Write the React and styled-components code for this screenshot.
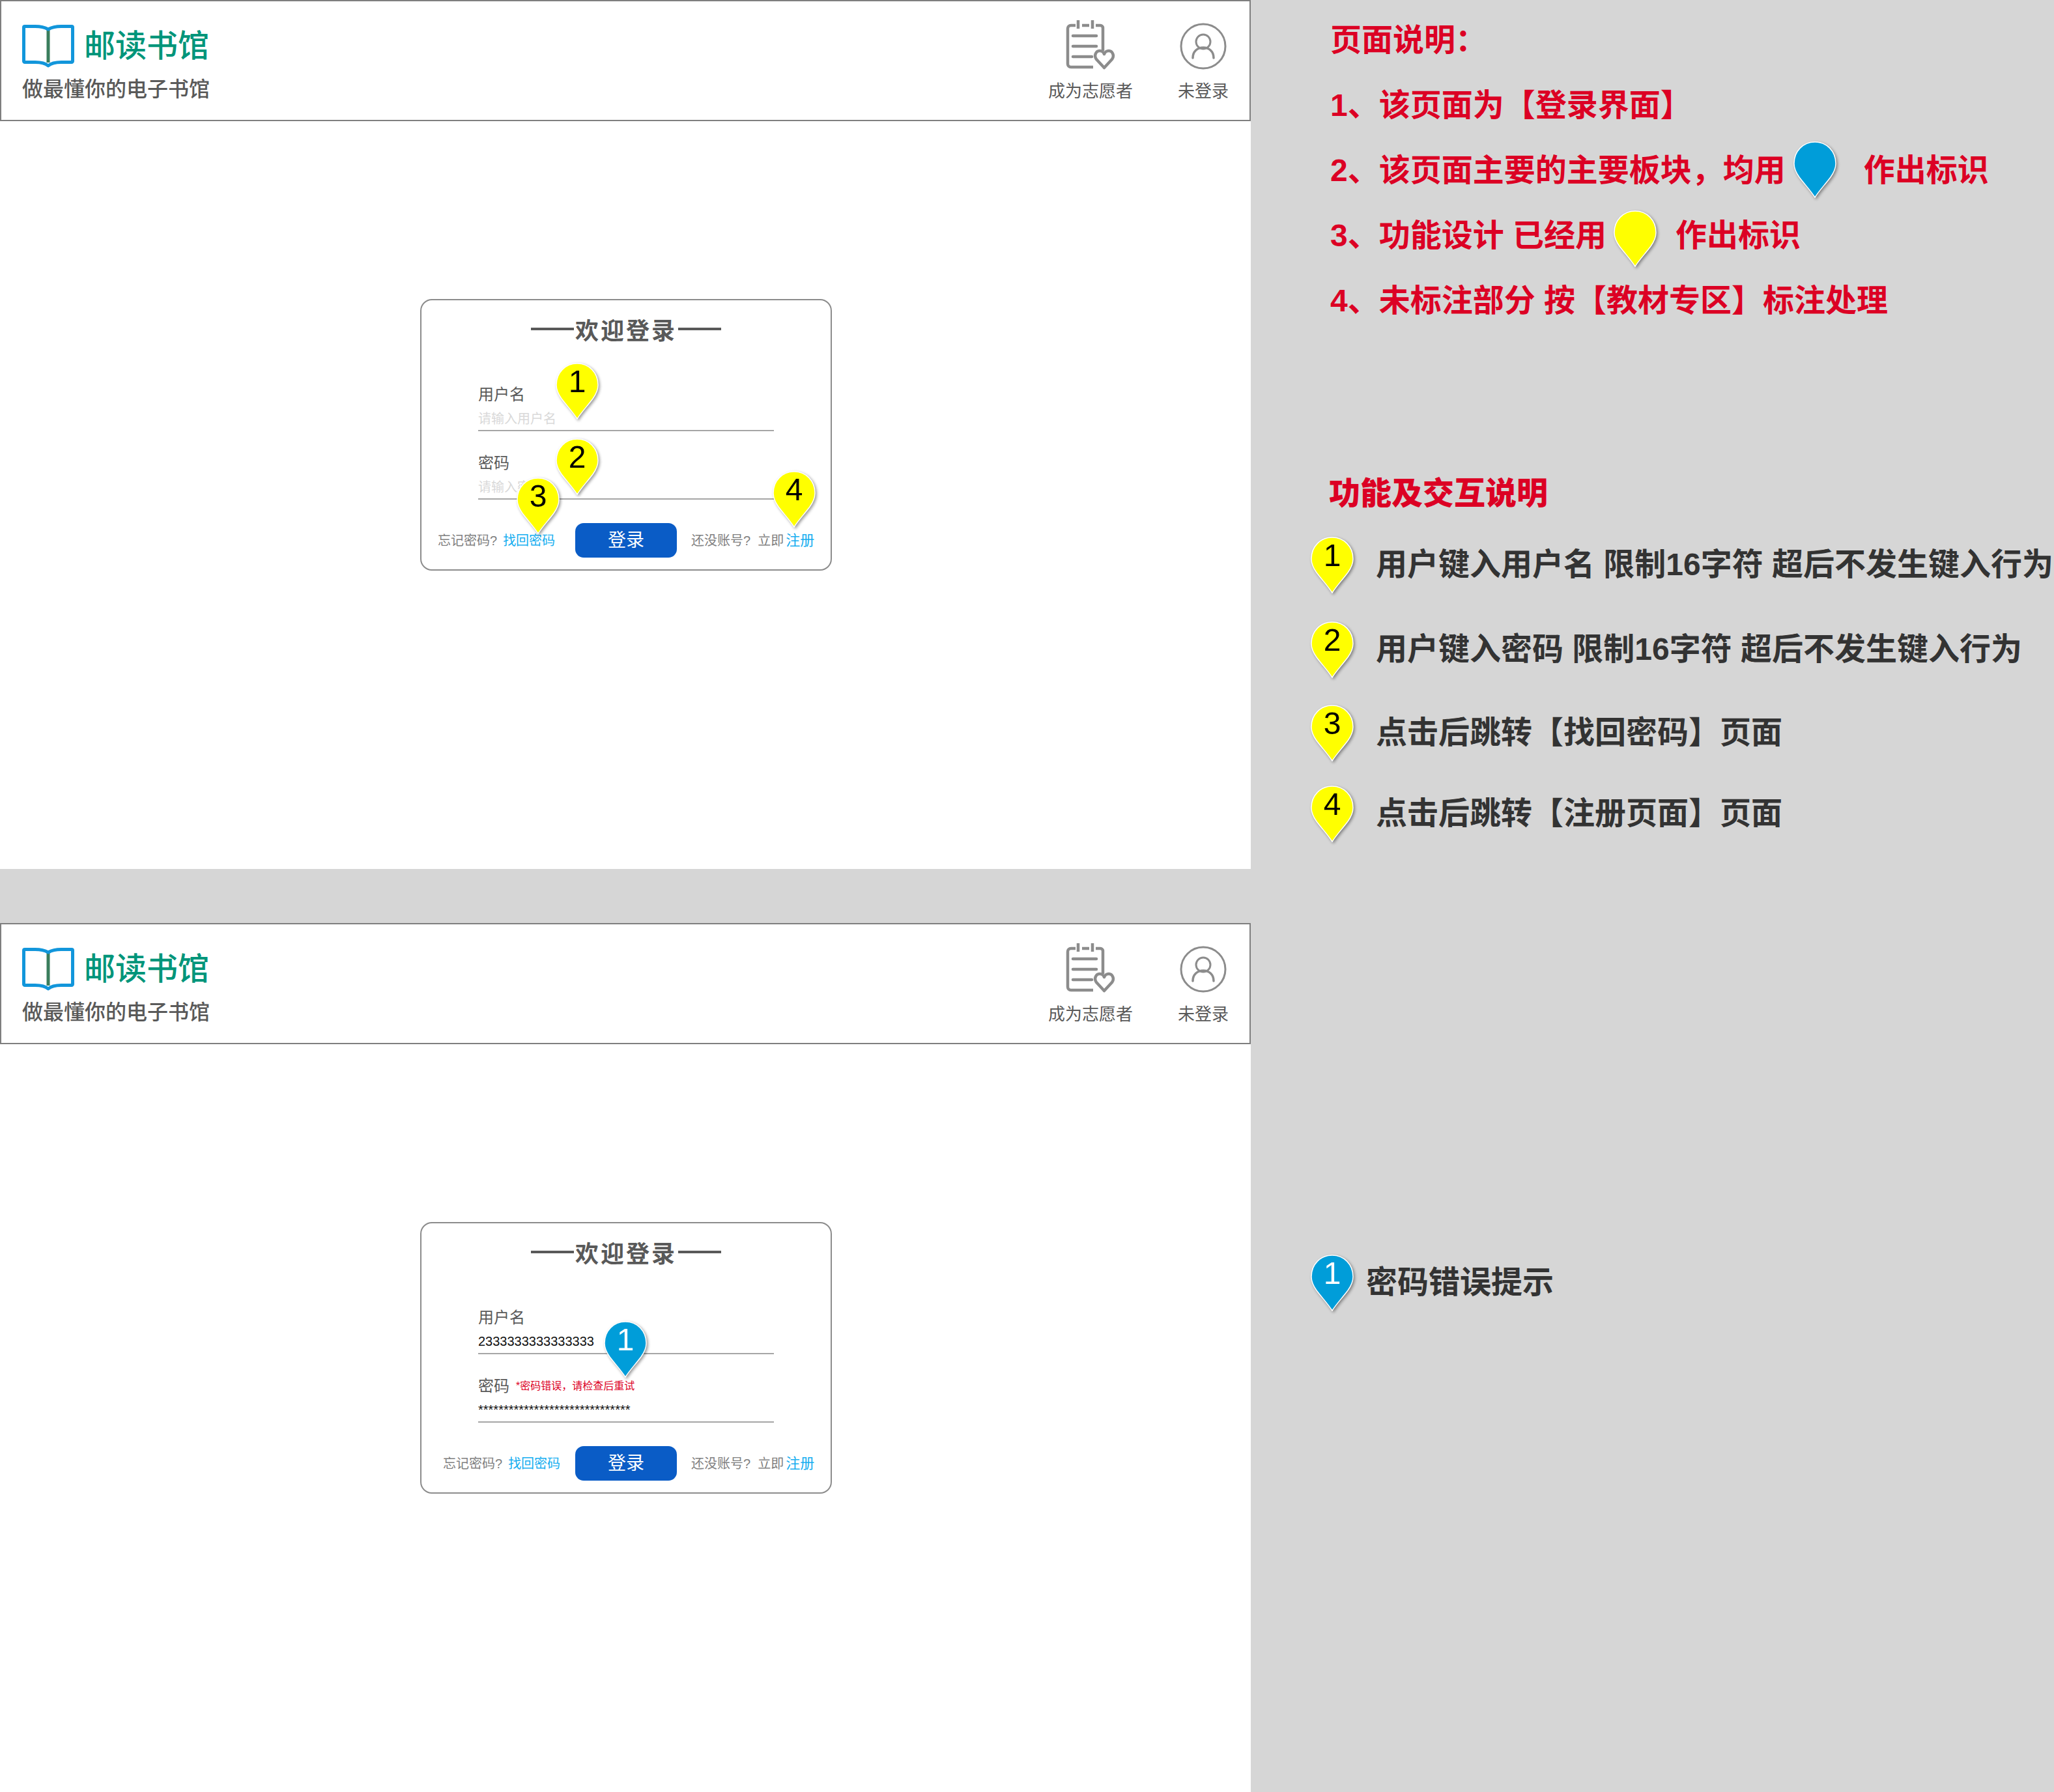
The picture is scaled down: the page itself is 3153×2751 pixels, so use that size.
import React from 'react';
import styled, { createGlobalStyle } from 'styled-components';

const colors = {
  page: '#d6d6d6',
  border: '#7f7f7f',
  rule: '#a6a6a6',
  text: '#595959',
  dark: '#333333',
  red: '#dc0024',
  teal: '#00957a',
  link: '#16aef0',
  button: '#0a5cc6',
  pinBlue: '#009dd9',
  pinYellow: '#ffff00'
};

const GlobalStyle = createGlobalStyle`
  html, body {
    margin: 0;
    padding: 0;
    background: ${colors.page};
  }
  body {
    font-family: "Liberation Sans", "Noto Sans CJK SC", sans-serif;
  }
`;

const Page = styled.div`
  display: flex;
  width: 3153px;
  height: 2751px;
  overflow: hidden;
  background: ${colors.page};
`;

const Screens = styled.div`
  display: flex;
  flex-direction: column;
  gap: 83px;
  width: 1920px;
  flex: none;
`;

const Screen = styled.section`
  display: flex;
  flex-direction: column;
  height: 1334px;
  background: #ffffff;
`;

const Header = styled.header`
  display: flex;
  align-items: stretch;
  justify-content: space-between;
  box-sizing: border-box;
  height: 186px;
  padding: 0 32px;
  border: 2px solid ${colors.border};
`;

const Brand = styled.div`
  display: flex;
  flex-direction: column;
  padding-top: 36px;
`;

const BrandTop = styled.div`
  display: flex;
  align-items: center;
  gap: 15px;
  height: 66px;
`;

const BrandName = styled.div`
  font-size: 48px;
  line-height: 60px;
  font-weight: 500;
  color: ${colors.teal};
`;

const BrandSlogan = styled.div`
  margin-top: 13px;
  font-size: 32px;
  line-height: 40px;
  font-weight: 500;
  color: ${colors.text};
`;

const Actions = styled.nav`
  display: flex;
  gap: 69px;
`;

const Action = styled.div`
  display: flex;
  flex-direction: column;
  align-items: center;
  padding-top: 29px;
`;

const ActionIcon = styled.div`
  display: flex;
  align-items: flex-end;
  height: 76px;
`;

const ActionLabel = styled.div`
  margin-top: 16px;
  font-size: 26px;
  line-height: 34px;
  color: ${colors.text};
`;

const ScreenBody = styled.div`
  display: flex;
  justify-content: center;
  padding-top: 273px;
  padding-left: 2px;
`;

const Card = styled.div`
  position: relative;
  box-sizing: border-box;
  width: 632px;
  height: 417px;
  padding-top: 20px;
  border: 2px solid #8c8c8c;
  border-radius: 18px;
  background: #ffffff;
`;

const CardTitle = styled.div`
  display: flex;
  align-items: center;
  justify-content: center;
  gap: 2px;
  height: 48px;
  font-size: 36px;
  font-weight: 700;
  letter-spacing: 3px;
  color: ${colors.text};
`;

const TitleRule = styled.span`
  width: 66px;
  height: 4px;
  background: ${colors.text};
`;

const Fields = styled.div`
  display: flex;
  flex-direction: column;
  gap: 34px;
  margin-top: 62px;
  padding: 0 87px;
`;

const Field = styled.div`
  display: flex;
  flex-direction: column;
`;

const FieldHead = styled.div`
  display: flex;
  align-items: center;
  gap: 10px;
  height: 30px;
`;

const FieldLabel = styled.div`
  font-size: 24px;
  line-height: 30px;
  color: ${colors.text};
`;

const FieldError = styled.div`
  font-size: 16px;
  line-height: 20px;
  color: ${colors.red};
`;

const FieldValue = styled.div`
  box-sizing: border-box;
  height: 41px;
  border-bottom: 2px solid ${colors.rule};
  font-size: 20px;
  line-height: ${(props) => (props.$empty ? 45 : 42)}px;
  white-space: nowrap;
  color: ${(props) => (props.$empty ? '#d9d9d9' : '#111111')};
`;

const CardFooter = styled.div`
  display: grid;
  grid-template-columns: 1fr 156px 1fr;
  align-items: center;
  margin-top: 36px;
  height: 53px;
`;

const FooterText = styled.div`
  display: flex;
  align-items: center;
  gap: ${(props) => props.$gap}px;
  padding-left: ${(props) => props.$inset}px;
  font-size: 20px;
  line-height: 26px;
  white-space: nowrap;
  color: ${colors.border};
`;

const FooterLink = styled.a`
  font-size: ${(props) => props.$size}px;
  line-height: 22px;
  color: ${colors.link};
`;

const SubmitButton = styled.button`
  height: 53px;
  padding: 0 0 5px;
  border: none;
  border-radius: 13px;
  background: ${colors.button};
  font-family: inherit;
  font-size: 28px;
  color: #ffffff;
`;

const PinWrap = styled.div`
  position: relative;
  flex: none;
  width: 66px;
  height: 87px;
  filter: drop-shadow(2px 2px 2px rgba(0, 0, 0, 0.4));
`;

const PinNumber = styled.span`
  position: absolute;
  top: 2px;
  left: 0;
  width: 66px;
  font-size: 48px;
  font-weight: 400;
  line-height: 54px;
  text-align: center;
  color: ${(props) => (props.$light ? '#ffffff' : '#000000')};
`;

const PinSpot = styled.div`
  position: absolute;
  left: ${(props) => props.$left}px;
  top: ${(props) => props.$top}px;
`;

const Notes = styled.aside`
  display: flex;
  flex-direction: column;
  padding-top: 7px;
  padding-left: 92px;
`;

const NoteList = styled.div`
  display: flex;
  flex-direction: column;
`;

const NoteRow = styled.div`
  display: flex;
  align-items: center;
  height: 100px;
  padding-left: 30px;
  font-size: 48px;
  font-weight: 700;
  white-space: nowrap;
  color: ${colors.red};
`;

const NotePin = styled.span`
  display: flex;
  margin: ${(props) => props.$drop}px ${(props) => props.$after}px 0 ${(props) => props.$before}px;
`;

const SectionTitle = styled.h2`
  margin: 221px 0 0;
  padding-left: 28px;
  font-size: 48px;
  line-height: 60px;
  font-weight: 900;
  color: ${colors.red};
`;

const Legend = styled.div`
  display: flex;
  flex-direction: column;
`;

const LegendRow = styled.div`
  display: flex;
  align-items: center;
  gap: ${(props) => props.$gap}px;
  margin-top: ${(props) => props.$top}px;
  font-size: 48px;
  font-weight: 700;
  white-space: nowrap;
  color: ${colors.dark};
`;

const LegendText = styled.span`
  margin-bottom: 12px;
`;

function Pin({ color, number, light }) {
  return (
    <PinWrap>
      <svg width="66" height="87" viewBox="0 0 66 87">
        <path
          d="M33 1C51 1 65 15 65 34C65 42 62 48 57 55C48 67 40 75 33 86C26 75 18 67 9 55C4 48 1 42 1 34C1 15 15 1 33 1Z"
          fill={color}
          stroke="#ffffff"
          strokeWidth="1.5"
        />
      </svg>
      {number && <PinNumber $light={light}>{number}</PinNumber>}
    </PinWrap>
  );
}

function BookLogo() {
  return (
    <svg width="80" height="66" viewBox="0 0 80 66">
      <rect x="37.5" y="8" width="5" height="50" fill="#3a7d5c" />
      <path
        d="M40 7C34 3.500 27 2.500 20 2.500H4A1.500 1.500 0 0 0 2.500 4V56A1.500 1.500 0 0 0 4 57.500H20C28 57.500 35 58.500 40 63C45 58.500 52 57.500 60 57.500H76A1.500 1.500 0 0 0 77.500 56V4A1.500 1.500 0 0 0 76 2.500H60C53 2.500 46 3.500 40 7Z"
        fill="none"
        stroke="#1296db"
        strokeWidth="5"
        strokeLinejoin="round"
      />
    </svg>
  );
}

function VolunteerIcon() {
  return (
    <svg width="76" height="76" viewBox="0 0 76 76" fill="none" stroke="#8c8c8c" strokeWidth="4.500">
      <path d="M15 8H8A5 5 0 0 0 3 13V67A5 5 0 0 0 8 72H42" />
      <path d="M46 8H53A4 4 0 0 1 57 12V47" />
      <path d="M19 0V13M41 0V13M25 8H36" />
      <path d="M11 24H47M11 40H47M11 56H40" strokeLinecap="round" />
      <path
        d="M59 73L47 60C43 55 46 47 52 47C55 47 58 49 59 52C60 49 63 47 66 47C72 47 75 55 71 60Z"
        strokeLinejoin="round"
      />
    </svg>
  );
}

function UserIcon() {
  return (
    <svg width="72" height="72" viewBox="0 0 72 72" fill="none" stroke="#8c8c8c" strokeWidth="3">
      <circle cx="36" cy="36" r="34" />
      <circle cx="36" cy="29" r="11" />
      <path d="M20 54C20 44 27 38 36 38C45 38 52 44 52 54" strokeWidth="3.500" strokeLinecap="round" />
    </svg>
  );
}

function SiteHeader() {
  return (
    <Header>
      <Brand>
        <BrandTop>
          <BookLogo />
          <BrandName>邮读书馆</BrandName>
        </BrandTop>
        <BrandSlogan>做最懂你的电子书馆</BrandSlogan>
      </Brand>
      <Actions>
        <Action>
          <ActionIcon>
            <VolunteerIcon />
          </ActionIcon>
          <ActionLabel>成为志愿者</ActionLabel>
        </Action>
        <Action>
          <ActionIcon>
            <UserIcon />
          </ActionIcon>
          <ActionLabel>未登录</ActionLabel>
        </Action>
      </Actions>
    </Header>
  );
}

function LoginCard({ filled, footerInset, children }) {
  return (
    <Card>
      <CardTitle>
        <TitleRule />
        欢迎登录
        <TitleRule />
      </CardTitle>
      <Fields>
        <Field>
          <FieldHead>
            <FieldLabel>用户名</FieldLabel>
          </FieldHead>
          <FieldValue $empty={!filled}>{filled ? '2333333333333333' : '请输入用户名'}</FieldValue>
        </Field>
        <Field>
          <FieldHead>
            <FieldLabel>密码</FieldLabel>
            {filled && <FieldError>*密码错误，请检查后重试</FieldError>}
          </FieldHead>
          <FieldValue $empty={!filled}>{filled ? '*'.repeat(30) : '请输入密码'}</FieldValue>
        </Field>
      </Fields>
      <CardFooter>
        <FooterText $inset={footerInset} $gap={9}>
          忘记密码?
          <FooterLink $size={20}>找回密码</FooterLink>
        </FooterText>
        <SubmitButton>登录</SubmitButton>
        <FooterText $inset={22} $gap={3}>
          还没账号?&nbsp;&nbsp;立即
          <FooterLink $size={22}>注册</FooterLink>
        </FooterText>
      </CardFooter>
      {children}
    </Card>
  );
}

const yellowPins = [
  { number: '1', left: 206, top: 96 },
  { number: '2', left: 206, top: 212 },
  { number: '3', left: 146, top: 272 },
  { number: '4', left: 539, top: 262 }
];

const legendRows = [
  { number: '1', top: 36, text: '用户键入用户名 限制16字符 超后不发生键入行为' },
  { number: '2', top: 43, text: '用户键入密码 限制16字符 超后不发生键入行为' },
  { number: '3', top: 41, text: '点击后跳转【找回密码】页面' },
  { number: '4', top: 37, text: '点击后跳转【注册页面】页面' }
];

function App() {
  return (
    <Page>
      <GlobalStyle />
      <Screens>
        <Screen>
          <SiteHeader />
          <ScreenBody>
            <LoginCard footerInset={25}>
              {yellowPins.map((pin) => (
                <PinSpot key={pin.number} $left={pin.left} $top={pin.top}>
                  <Pin color={colors.pinYellow} number={pin.number} />
                </PinSpot>
              ))}
            </LoginCard>
          </ScreenBody>
        </Screen>
        <Screen>
          <SiteHeader />
          <ScreenBody>
            <LoginCard filled footerInset={33}>
              <PinSpot $left={280} $top={150}>
                <Pin color={colors.pinBlue} number="1" light />
              </PinSpot>
            </LoginCard>
          </ScreenBody>
        </Screen>
      </Screens>
      <Notes>
        <NoteList>
          <NoteRow>页面说明：</NoteRow>
          <NoteRow>1、该页面为【登录界面】</NoteRow>
          <NoteRow>
            2、该页面主要的主要板块，均用
            <NotePin $drop={7} $before={12} $after={42}>
              <Pin color={colors.pinBlue} />
            </NotePin>
            作出标识
          </NoteRow>
          <NoteRow>
            3、功能设计 已经用
            <NotePin $drop={18} $before={11} $after={29}>
              <Pin color={colors.pinYellow} />
            </NotePin>
            作出标识
          </NoteRow>
          <NoteRow>4、未标注部分 按【教材专区】标注处理</NoteRow>
        </NoteList>
        <SectionTitle>功能及交互说明</SectionTitle>
        <Legend>
          {legendRows.map((row) => (
            <LegendRow key={row.number} $top={row.top} $gap={34}>
              <Pin color={colors.pinYellow} number={row.number} />
              <LegendText>{row.text}</LegendText>
            </LegendRow>
          ))}
          <LegendRow $top={633} $gap={19}>
            <Pin color={colors.pinBlue} number="1" light />
            <LegendText>密码错误提示</LegendText>
          </LegendRow>
        </Legend>
      </Notes>
    </Page>
  );
}

export default App;
